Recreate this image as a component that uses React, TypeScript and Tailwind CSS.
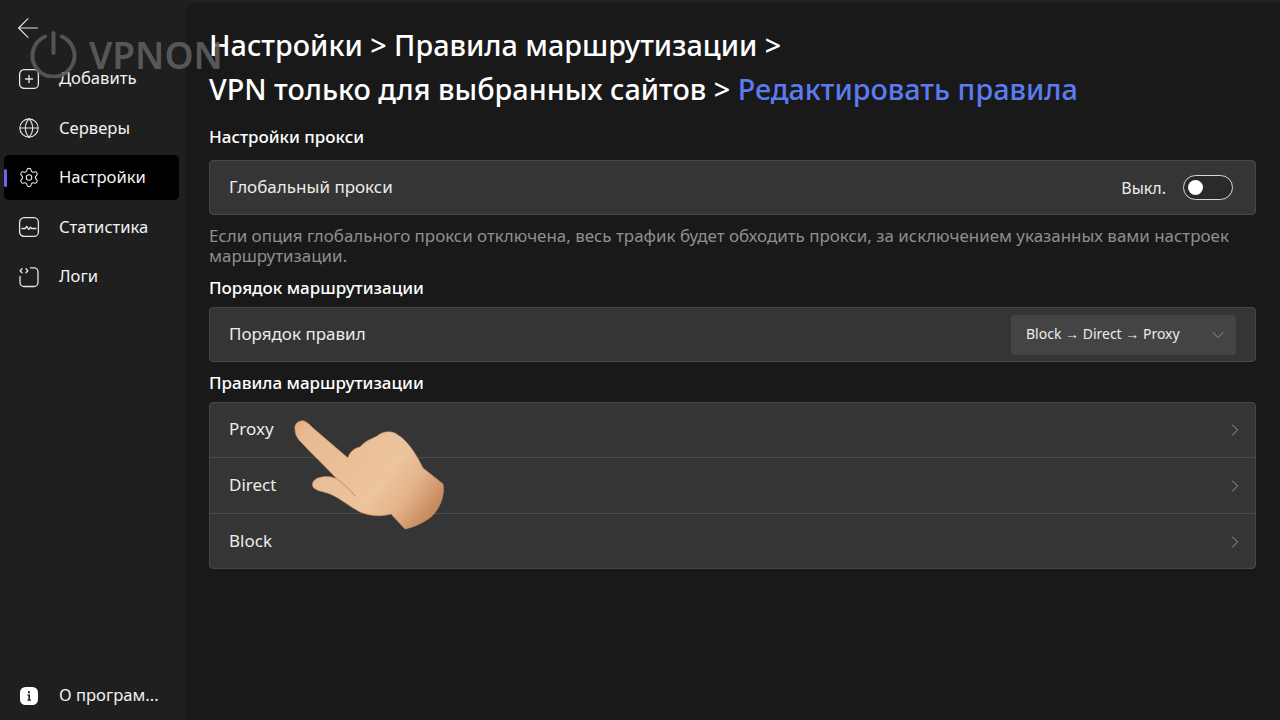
import { ArrowLeft, ChevronDown, ChevronRight, Globe, Settings } from 'lucide-react';
import type { ReactNode } from 'react';

const font = 'font-["Noto_Sans","Open_Sans",sans-serif]';

function PlusIcon() {
  return (
    <svg width="22" height="22" viewBox="0 0 22 22" fill="none" stroke="currentColor" strokeWidth="1.3">
      <rect x="1.6" y="1.6" width="18.8" height="18.8" rx="4.5" />
      <path d="M11 7.5v7M7.5 11h7" strokeLinecap="round" />
    </svg>
  );
}

function StatsIcon() {
  return (
    <svg width="22" height="22" viewBox="0 0 22 22" fill="none" stroke="currentColor" strokeWidth="1.3">
      <rect x="1.6" y="1.6" width="18.8" height="18.8" rx="4.5" />
      <path d="M4 12.5h3.2l1.6-2.2 2 3.2 1.8-2.4.9 1.4H18" strokeLinecap="round" strokeLinejoin="round" />
    </svg>
  );
}

function LogsIcon() {
  return (
    <svg width="22" height="22" viewBox="0 0 22 22" fill="none" stroke="currentColor" strokeWidth="1.3">
      <path d="M12.5 1.8H16a4 4 0 0 1 4 4V16.5a4 4 0 0 1-4 4H6a4 4 0 0 1-4-4V10.5" strokeLinecap="round" />
      <path d="M4 2.8 2.2 4.8 4 6.8M8 2.8l1.8 2L8 6.8" strokeLinecap="round" strokeLinejoin="round" />
    </svg>
  );
}

function InfoIcon() {
  return (
    <svg width="20" height="20" viewBox="0 0 20 20">
      <rect x="1" y="1" width="18" height="18" rx="5.5" fill="#fff" />
      <path d="M9 5.2h2v2H9zM8.4 8.6H11v5h1v1.2H8.4v-1.2h1v-3.8h-1z" fill="#222" />
    </svg>
  );
}

function NavItem({ icon, label, active }: { icon: ReactNode; label: string; active?: boolean }) {
  return (
    <div className={`relative flex h-[45px] items-center rounded-[5px] pl-[14px] ${active ? 'bg-black' : ''}`}>
      {active && <div className="absolute left-0 top-[14px] h-[18px] w-[3px] rounded-full bg-[#7360f2]" />}
      <div className="flex w-[22px] justify-center text-[#e6e6e6]">{icon}</div>
      <span className="ml-[19px] text-[16.6px] text-[#f2f2f2]">{label}</span>
    </div>
  );
}

function SectionLabel({ children }: { children: ReactNode }) {
  return <div className="text-[17px] font-medium leading-[22px] text-white">{children}</div>;
}

function RuleRow({ label, height, last }: { label: string; height: string; last?: boolean }) {
  return (
    <div className={`flex items-center justify-between pl-[19px] pr-[10px] ${height} ${last ? 'pt-[2px]' : 'border-b border-[#4a4a4a]'}`}>
      <span className="-mt-[2px] text-[17px] text-[#ececec]">{label}</span>
      <ChevronRight size={20} strokeWidth={1} className="text-[#b0b0b0]" />
    </div>
  );
}

// hand is a picture in the reference, drawn over the rows
function Hand() {
  return (
    <svg className="absolute left-[280px] top-[400px]" width="180" height="140" viewBox="0 0 180 140">
      <defs>
        <linearGradient id="skin" gradientUnits="userSpaceOnUse" x1="15" y1="20" x2="160" y2="125">
          <stop offset="0" stopColor="#e2ae84" />
          <stop offset="0.1" stopColor="#e8bb92" />
          <stop offset="0.6" stopColor="#ecc49d" />
          <stop offset="0.75" stopColor="#e4b48a" />
          <stop offset="1" stopColor="#b8774a" />
        </linearGradient>
      </defs>
      <path
        d="M15 29 C14 24 19 20 24 21 C27 22 29 24 33 28 L68 58 C69 53 74 48 80 47 C86 40 92 39 97 36 C103 31 112 30 118 35 C128 41 136 54 143 68 L163 84 C165 96 160 108 152 116 C145 122 135 127 125 129 L111 114 C100 117 90 116 80 112 C70 107 60 98 50 94 C42 91 36 91 33 87 C31 82 35 78 42 77 C48 76 53 77 57 79 C44 65 30 52 19 40 C16 36 15 33 15 29 Z"
        fill="url(#skin)"
        stroke="#cf9569"
        strokeWidth="1"
        strokeOpacity="0.6"
      />
      <path d="M57 79 C64 84 70 90 75 96" fill="none" stroke="#c98f63" strokeWidth="1.2" opacity="0.7" />
    </svg>
  );
}

export default function App() {
  return (
    <div className={`relative flex h-[720px] w-[1280px] overflow-hidden bg-[#1f1f1f] ${font}`}>
      <aside className="flex w-[186px] shrink-0 flex-col pb-[2px] pl-[4px] pr-[7px] pt-[12px]">
        <div className="mb-[12px] flex h-[32px] pl-[8px] text-[#e6e6e6]">
          <ArrowLeft size={32} strokeWidth={0.8} />
        </div>
        <div className="flex flex-col gap-[4.6px]">
          <NavItem icon={<PlusIcon />} label="Добавить" />
          <NavItem icon={<Globe size={22} strokeWidth={1.2} />} label="Серверы" />
          <NavItem icon={<Settings size={23} strokeWidth={1.2} />} label="Настройки" active />
          <NavItem icon={<StatsIcon />} label="Статистика" />
          <NavItem icon={<LogsIcon />} label="Логи" />
        </div>
        <div className="mt-auto">
          <NavItem icon={<InfoIcon />} label="О програм..." />
        </div>
      </aside>

      <main className="mt-[3px] flex-1 rounded-tl-[8px] bg-[#191919] pl-[23px] pr-[24px] pt-[3px]">
        <h1 className="-mt-[2px] pb-[1px] pt-[19px] text-[28.75px] font-medium leading-[44px] text-white">
          Настройки &gt; Правила маршрутизации &gt;
          <br />
          VPN только для выбранных сайтов &gt; <span className="text-[#5b7cf0]">Редактировать правила</span>
        </h1>

        <div className="mt-[14px]">
          <SectionLabel>Настройки прокси</SectionLabel>
        </div>
        <div className="mt-[12px] flex h-[55px] items-center justify-between rounded-[4px] border border-[#484848] bg-[#353535] pl-[19px] pr-[22px]">
          <span className="-mt-[2px] text-[17px] text-[#ececec]">Глобальный прокси</span>
          <div className="flex items-center gap-[17px]">
            <span className="text-[16px] text-[#ececec]">Выкл.</span>
            <div className="flex h-[25px] w-[50px] items-center rounded-full border border-[#d8d8d8] bg-[#2a2a2a] pl-[4px]">
              <div className="h-[15px] w-[15px] rounded-full bg-white" />
            </div>
          </div>
        </div>
        <p className="mt-[11px] text-[16.93px] leading-[20px] text-[#8f8f8f]">
          Если опция глобального прокси отключена, весь трафик будет обходить прокси, за исключением указанных вами настроек маршрутизации.
        </p>

        <div className="mt-[11px]">
          <SectionLabel>Порядок маршрутизации</SectionLabel>
        </div>
        <div className="mt-[8px] flex h-[55px] items-center justify-between rounded-[4px] border border-[#484848] bg-[#353535] pl-[19px] pr-[19px]">
          <span className="-mt-[2px] text-[17px] text-[#ececec]">Порядок правил</span>
          <div className="flex h-[40px] w-[225px] items-center justify-between rounded-[4px] bg-[#444444] pl-[15px] pr-[8px]">
            <span className="-mt-[2px] text-[14px] text-[#ececec]">Block → Direct → Proxy</span>
            <ChevronDown size={20} strokeWidth={1} className="text-[#a0a0a0]" />
          </div>
        </div>

        <div className="mt-[10px]">
          <SectionLabel>Правила маршрутизации</SectionLabel>
        </div>
        <div className="mt-[8px] overflow-hidden rounded-[4px] border border-[#484848] bg-[#353535]">
          <RuleRow label="Proxy" height="h-[55px]" />
          <RuleRow label="Direct" height="h-[56px]" />
          <RuleRow label="Block" height="h-[54px]" last />
        </div>
      </main>

      {/* watermark */}
      <div className="pointer-events-none absolute left-[30px] top-[31px] flex items-center opacity-90">
        <svg width="47" height="47" viewBox="0 0 47 47" fill="none" stroke="#5a5a5a" strokeWidth="4">
          <path d="M15 5.5a21 21 0 1 0 17 0" strokeLinecap="round" />
          <path d="M23.5 2v20" strokeLinecap="round" />
        </svg>
        <span className="ml-[12px] text-[37px] font-semibold leading-none text-[#5e5e5e]">VPNON</span>
      </div>

      <Hand />
    </div>
  );
}
